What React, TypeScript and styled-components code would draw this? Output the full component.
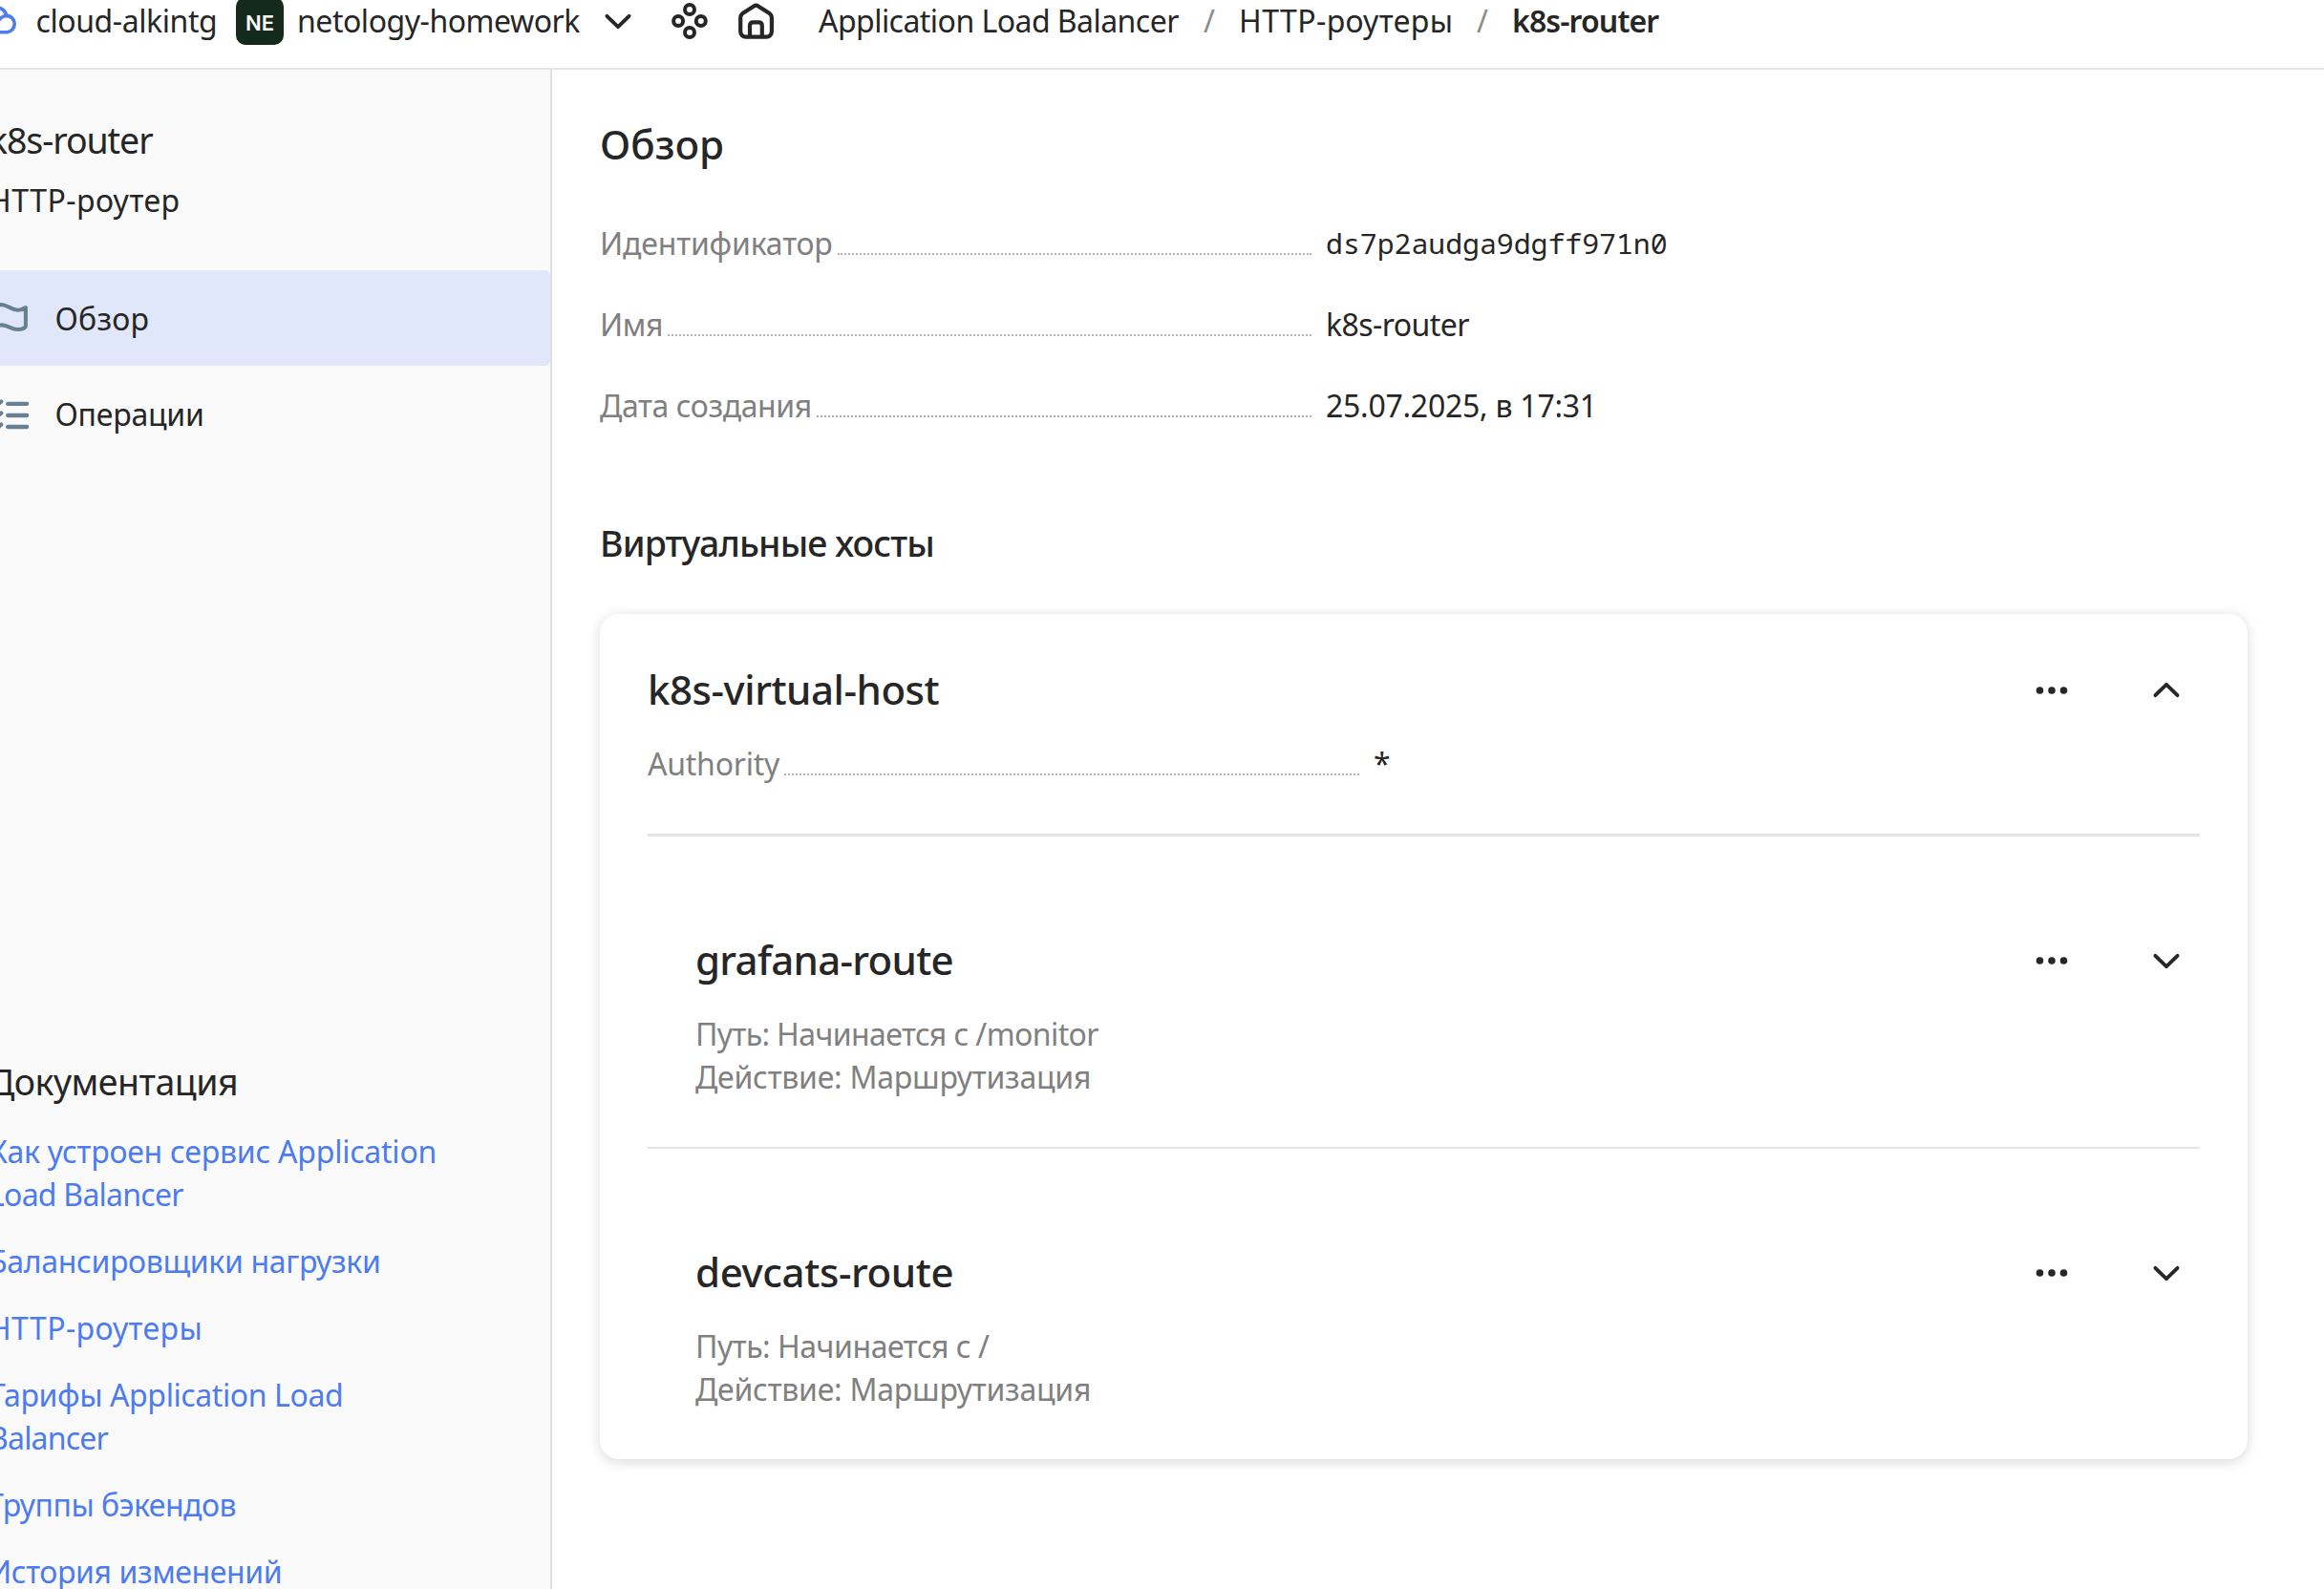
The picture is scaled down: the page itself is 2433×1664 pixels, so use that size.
import React from 'react';
import styled, { createGlobalStyle } from 'styled-components';

const color = {
  text: '#262626',
  muted: '#808080',
  line: '#e5e5e5',
  leader: '#b3b3b3',
  link: '#4d7cf0',
  icon: '#688094',
};

const GlobalStyle = createGlobalStyle`
  * { box-sizing: border-box; }
  body {
    margin: 0;
    background: #ffffff;
    color: ${color.text};
    font-family: 'Noto Sans', 'Open Sans', sans-serif;
    font-size: 32px;
    line-height: 45px;
  }
  h1, h2, h3, p, ul, dl, dt, dd { margin: 0; padding: 0; font-weight: inherit; }
  ul { list-style: none; }
`;

const Page = styled.div`
  width: 2433px;
  height: 1664px;
  overflow: hidden;
  display: flex;
  flex-direction: column;
`;

const TopBar = styled.header`
  flex: none;
  height: 73px;
  padding-bottom: 27px;
  border-bottom: 2px solid ${color.line};
  display: grid;
  grid-template-columns: 37.5px 209.5px 64px 316px 75px 70px 85px 403px 37px 249px 37px auto;
  grid-template-rows: 44px;
  align-items: center;
`;

const Crumb = styled.span<{ $tracking?: number; $strong?: boolean }>`
  padding-bottom: 2px;
  white-space: nowrap;
  letter-spacing: ${(p) => p.$tracking ?? 0}px;
  font-weight: ${(p) => (p.$strong ? 600 : 400)};
`;

const Slash = styled(Crumb)`
  color: #8c8c8c;
`;

const Badge = styled.span`
  width: 50px;
  height: 50px;
  padding-top: 3px;
  border-radius: 10px;
  background: #13291b;
  color: #ffffff;
  display: flex;
  align-items: center;
  justify-content: center;
  font: 600 22px/28px Inter, 'Noto Sans', sans-serif;
`;

const Icon = styled.svg`
  display: block;
  flex: none;
  overflow: visible;
  fill: none;
  stroke: currentColor;
  stroke-linecap: round;
  stroke-linejoin: round;
`;

const Body = styled.div`
  flex: 1;
  min-height: 0;
  display: flex;
`;

const Sidebar = styled.aside`
  flex: none;
  width: 615px;
  margin-left: -37px;
  padding-top: 49px;
  background: #fafafa;
  border-right: 2px solid #e0e0e0;
  display: flex;
  flex-direction: column;
`;

const SideTitle = styled.h2<{ $tracking: number }>`
  padding-left: 25px;
  font-size: 37.5px;
  line-height: 50px;
  letter-spacing: ${(p) => p.$tracking}px;
`;

const SideSubtitle = styled.p`
  margin-top: 15px;
  padding-left: 25px;
  letter-spacing: 0.5px;
`;

const Nav = styled.nav`
  margin-top: 51px;
`;

const NavItem = styled.div<{ $active?: boolean; $tracking: number }>`
  height: 100px;
  padding: 1px 0 0 25px;
  border-radius: 5px;
  background: ${(p) => (p.$active ? '#e1e7fb' : 'transparent')};
  display: flex;
  align-items: center;
  gap: 24.5px;
  letter-spacing: ${(p) => p.$tracking}px;

  svg { color: ${color.icon}; }
`;

const Docs = styled.section`
  margin-top: 625px;
`;

const DocList = styled.ul`
  margin-top: 25px;
  padding-left: 25px;
  display: flex;
  flex-direction: column;
  gap: 25px;
`;

const DocLink = styled.li`
  color: ${color.link};
`;

const DocLine = styled.span<{ $tracking: number }>`
  display: block;
  white-space: nowrap;
  letter-spacing: ${(p) => p.$tracking}px;
`;

const Main = styled.main`
  flex: 1;
  padding: 48px 80px 0 50px;
`;

const PageTitle = styled.h1`
  font-size: 42px;
  font-weight: 500;
  line-height: 60px;
  letter-spacing: 0.1px;
`;

const Definitions = styled.dl`
  margin-top: 51px;
  display: flex;
  flex-direction: column;
  gap: 40px;
`;

const DefinitionRow = styled.div`
  height: 45px;
  display: flex;
  gap: 15px;
`;

const Term = styled.dt<{ $tracking: number }>`
  width: 745px;
  color: ${color.muted};
  letter-spacing: ${(p) => p.$tracking}px;
  display: flex;
  gap: 5px;

  &::after {
    content: '';
    flex: 1;
    height: 33px;
    border-bottom: 2px dotted ${color.leader};
  }
`;

const Value = styled.dd<{ $tracking?: number; $mono?: boolean }>`
  letter-spacing: ${(p) => p.$tracking ?? 0}px;
  ${(p) => p.$mono && `font-family: 'Noto Sans Mono', 'DejaVu Sans Mono', monospace; font-size: 29.8px;`}
`;

const SectionTitle = styled.h2`
  margin-top: 97px;
  font-size: 37.5px;
  font-weight: 500;
  line-height: 50px;
  letter-spacing: -0.88px;
`;

const Card = styled.section`
  width: 1725px;
  height: 885px;
  margin-top: 49px;
  padding: 50px;
  border-radius: 20px;
  background: #ffffff;
  box-shadow: 0 2.5px 12.5px rgba(0, 0, 0, 0.15);
`;

const CardHeader = styled.div`
  height: 60px;
  display: flex;
  align-items: center;
  gap: 50px;
`;

const CardTitle = styled.h3<{ $tracking: number }>`
  flex: 1;
  padding-bottom: 2px;
  font-size: 42px;
  font-weight: 500;
  line-height: 56px;
  letter-spacing: ${(p) => p.$tracking}px;
`;

const IconButton = styled.span`
  width: 70px;
  height: 60px;
  display: flex;
  align-items: center;
  justify-content: center;
`;

const HostInfo = styled.dl`
  margin-top: 24px;
  padding-bottom: 51px;
  border-bottom: 3px solid ${color.line};
`;

const Route = styled.article`
  padding-top: 100px;

  & + & {
    margin-top: 51px;
    border-top: 2px solid ${color.line};
  }
`;

const RouteHeader = styled(CardHeader)`
  padding-left: 50px;
`;

const RouteDetails = styled.div`
  margin-top: 24px;
  padding-left: 50px;
  color: ${color.muted};
`;

const Detail = styled.p<{ $tracking: number }>`
  letter-spacing: ${(p) => p.$tracking}px;
`;

const Chevron = ({ up = false }: { up?: boolean }) => (
  <Icon width="40" height="40" viewBox="0 0 40 40" strokeWidth="3.8">
    <path d={up ? 'M8.4 25.2 20 13.8 31.6 25.2' : 'M8.4 14.8 20 26.2 31.6 14.8'} />
  </Icon>
);

const Ellipsis = () => (
  <Icon width="40" height="40" viewBox="0 0 40 40">
    {[7.5, 20, 32.5].map((x) => (
      <circle key={x} cx={x} cy="20" r="3.8" fill="currentColor" stroke="none" />
    ))}
  </Icon>
);

const CloudIcon = () => (
  <Icon width="20" height="44" viewBox="0 0 20 44" strokeWidth="3.6" color={color.link}>
    <path d="M-8 33.7H7.6A8.5 8.7 0 0 0 7.6 16.4C3.6 16.4 1.4 17.6-.8 20.6" />
    <path d="M-4 7.6C2 8.2 5.6 11.4 6.8 16.4" />
  </Icon>
);

const ServicesIcon = () => (
  <Icon width="40" height="44" viewBox="0 0 40 44" strokeWidth="4">
    <circle cx="20" cy="10" r="5" />
    <circle cx="8.1" cy="22" r="5" />
    <circle cx="31.8" cy="22" r="5" />
    <circle cx="20" cy="34" r="5" />
  </Icon>
);

const HomeIcon = () => (
  <Icon width="40" height="44" viewBox="0 0 40 44" strokeWidth="4.2">
    <path d="M3.2 18.6C3.2 16.8 4 15.2 5.5 14.1L17.2 6.4C18.7 5.4 20.3 5.4 21.8 6.4L33.6 14.1C35.1 15.2 35.9 16.8 35.9 18.6V32.8C35.9 36.4 33.7 38.6 30.1 38.6H9C5.4 38.6 3.2 36.4 3.2 32.8Z" />
    <path d="M13 38V26.8C13 24.5 14.2 23.3 16.5 23.3H22.3C24.6 23.3 25.8 24.5 25.8 26.8V38" />
  </Icon>
);

const FlagIcon = () => (
  <Icon width="45" height="45" viewBox="-12 310.5 45 45" strokeWidth="4.1">
    <path d="M-8 318.6C-4 319 0 318.4 3 318.8C9 319.6 12 324.2 19 324.2C22 324.2 24.4 323.2 26.9 321.6V340.4C26.9 343 23 344.5 19 344.5C11 344.5 9 340.2 2 339.9C-2 339.9-5 341-8 342" />
  </Icon>
);

const ListCheckIcon = () => (
  <Icon width="45" height="45" viewBox="-12 411.5 45 45" strokeWidth="4.3">
    {[423.4, 435.5, 447.5].map((y) => (
      <React.Fragment key={y}>
        <path d={`M8.2 ${y}H28.2`} />
        <path d={`M-9 ${y}L-5.5 ${y + 3.2}L1.2 ${y - 2.4}`} />
      </React.Fragment>
    ))}
  </Icon>
);

type Line = { text: string; tracking: number };

const docs: Line[][] = [
  [
    { text: 'Как устроен сервис Application', tracking: -0.23 },
    { text: 'Load Balancer', tracking: -0.75 },
  ],
  [{ text: 'Балансировщики нагрузки', tracking: -0.34 }],
  [{ text: 'HTTP-роутеры', tracking: 0.4 }],
  [
    { text: 'Тарифы Application Load', tracking: -0.4 },
    { text: 'Balancer', tracking: -0.8 },
  ],
  [{ text: 'Группы бэкендов', tracking: -0.5 }],
  [{ text: 'История изменений', tracking: -0.4 }],
];

const routes = [
  { name: 'grafana-route', tracking: -0.69, path: 'Путь: Начинается с /monitor', pathTracking: -0.59 },
  { name: 'devcats-route', tracking: -0.38, path: 'Путь: Начинается с /', pathTracking: -0.45 },
];

export default function App() {
  return (
    <>
      <GlobalStyle />
      <Page>
        <TopBar>
          <CloudIcon />
          <Crumb $tracking={-0.42}>cloud-alkintg</Crumb>
          <Badge>NE</Badge>
          <Crumb $tracking={-0.47}>netology-homework</Crumb>
          <Chevron />
          <ServicesIcon />
          <HomeIcon />
          <Crumb $tracking={-0.54}>Application Load Balancer</Crumb>
          <Slash>/</Slash>
          <Crumb $tracking={0.42}>HTTP-роутеры</Crumb>
          <Slash>/</Slash>
          <Crumb $strong $tracking={-0.88}>k8s-router</Crumb>
        </TopBar>
        <Body>
          <Sidebar>
            <SideTitle $tracking={-1.07}>k8s-router</SideTitle>
            <SideSubtitle>HTTP-роутер</SideSubtitle>
            <Nav>
              <NavItem $active $tracking={0.25}>
                <FlagIcon />
                Обзор
              </NavItem>
              <NavItem $tracking={-0.23}>
                <ListCheckIcon />
                Операции
              </NavItem>
            </Nav>
            <Docs>
              <SideTitle as="h3" $tracking={-0.52}>Документация</SideTitle>
              <DocList>
                {docs.map((lines) => (
                  <DocLink key={lines[0].text}>
                    {lines.map((l) => (
                      <DocLine key={l.text} $tracking={l.tracking}>{l.text}</DocLine>
                    ))}
                  </DocLink>
                ))}
              </DocList>
            </Docs>
          </Sidebar>
          <Main>
            <PageTitle>Обзор</PageTitle>
            <Definitions>
              <DefinitionRow>
                <Term $tracking={-0.18}>Идентификатор</Term>
                <Value $mono>ds7p2audga9dgff971n0</Value>
              </DefinitionRow>
              <DefinitionRow>
                <Term $tracking={-0.4}>Имя</Term>
                <Value $tracking={-0.56}>k8s-router</Value>
              </DefinitionRow>
              <DefinitionRow>
                <Term $tracking={-0.4}>Дата создания</Term>
                <Value $tracking={-0.25}>25.07.2025, в 17:31</Value>
              </DefinitionRow>
            </Definitions>
            <SectionTitle>Виртуальные хосты</SectionTitle>
            <Card>
              <CardHeader>
                <CardTitle $tracking={-0.45}>k8s-virtual-host</CardTitle>
                <IconButton><Ellipsis /></IconButton>
                <IconButton><Chevron up /></IconButton>
              </CardHeader>
              <HostInfo>
                <DefinitionRow>
                  <Term $tracking={-0.23}>Authority</Term>
                  <Value>*</Value>
                </DefinitionRow>
              </HostInfo>
              {routes.map((r) => (
                <Route key={r.name}>
                  <RouteHeader>
                    <CardTitle $tracking={r.tracking}>{r.name}</CardTitle>
                    <IconButton><Ellipsis /></IconButton>
                    <IconButton><Chevron /></IconButton>
                  </RouteHeader>
                  <RouteDetails>
                    <Detail $tracking={r.pathTracking}>{r.path}</Detail>
                    <Detail $tracking={-0.24}>Действие: Маршрутизация</Detail>
                  </RouteDetails>
                </Route>
              ))}
            </Card>
          </Main>
        </Body>
      </Page>
    </>
  );
}
